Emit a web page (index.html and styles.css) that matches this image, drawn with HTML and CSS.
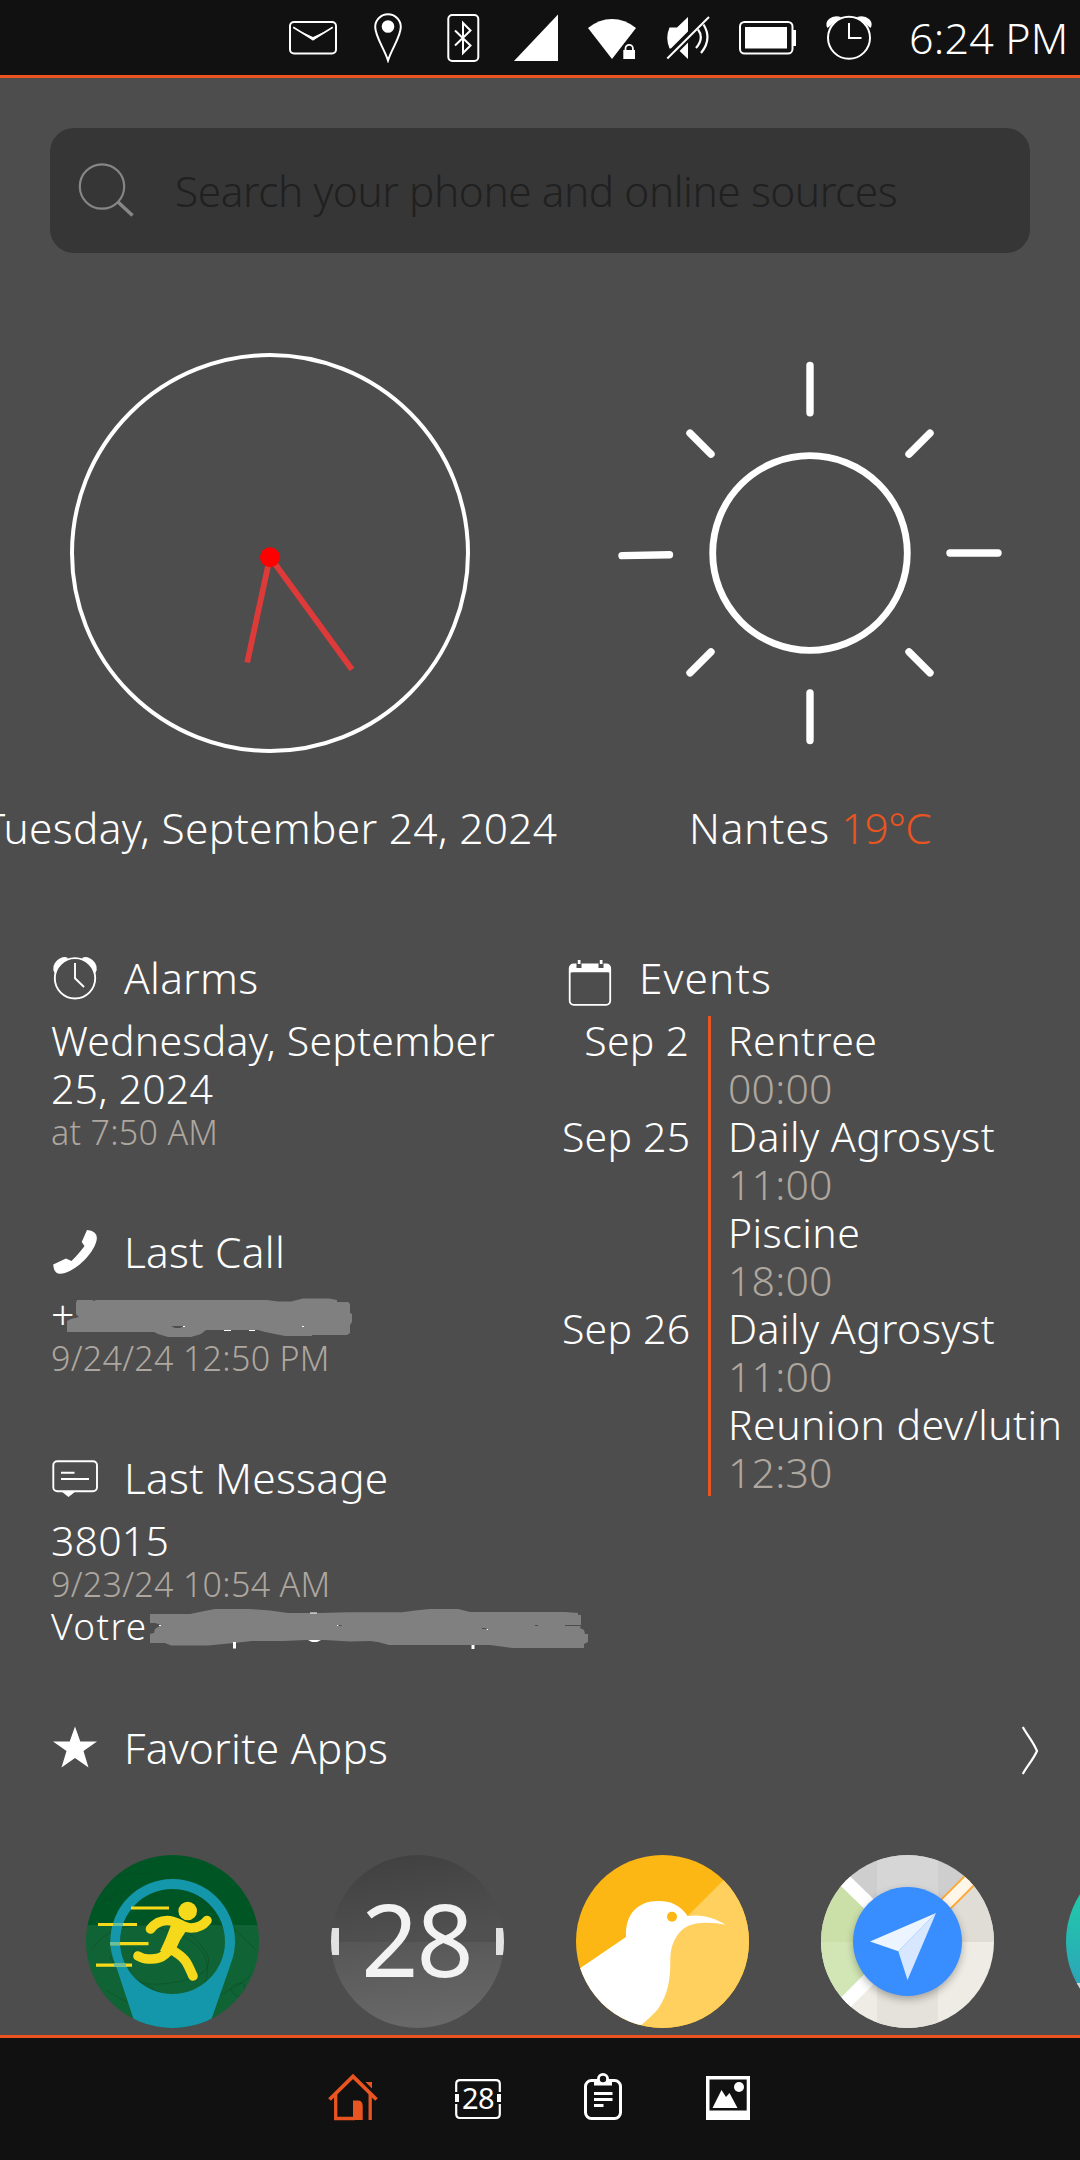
FILE: index.html
```
<!DOCTYPE html>
<html lang="en">
<head>
<meta charset="utf-8">
<title>Home</title>
<link rel="stylesheet" href="styles.css">
</head>
<body>
<header class="status-bar">
  <svg class="status-icon" viewBox="287 12 51 51"><rect x="290" y="22" width="46" height="31.5" rx="4" fill="none" stroke="#fff" stroke-width="2"/><path d="M293.2 27.2 313 39.5 332.8 27.2" fill="none" stroke="#fff" stroke-width="1.6"/><path d="M301 31.5 313 37 325 31.5 313 40.5Z" fill="#fff"/></svg>
  <svg class="status-icon" viewBox="362 12 51 51"><path d="M388 60.500C384.500 49 375.200 36.500 375.200 27A12.800 12.800 0 0 1 400.800 27C400.800 36.500 391.500 49 388 60.500Z" fill="none" stroke="#fff" stroke-width="2"/><circle cx="388" cy="26.500" r="6.300" fill="#fff"/></svg>
  <svg class="status-icon" viewBox="437 12 51 51"><rect x="448.300" y="15" width="30" height="46" rx="4" fill="none" stroke="#fff" stroke-width="2"/><path d="M455 30.500 470.500 45.500 463 53V23L470.500 30.500 455 45.500" fill="none" stroke="#fff" stroke-width="2"/></svg>
  <svg class="status-icon" viewBox="512 12 51 51"><path d="M558 14.500V61H514Z" fill="#fff"/></svg>
  <svg class="status-icon" viewBox="587 12 51 51"><path d="M588 28Q599 19 612 19T636 28L612 59Z" fill="#fff"/><path d="M621 61V48.500H624V43H635V48.500H637V61Z" fill="#111"/><rect x="623.300" y="50" width="11.700" height="9" fill="#fff"/><path d="M625.500 51V48.500a3.700 3.700 0 0 1 7.400 0V51" fill="none" stroke="#fff" stroke-width="1.800"/></svg>
  <svg class="status-icon" viewBox="662 12 51 51"><path d="M669.500 27.500H677L688 17V59L677 48.500H669.500Q665 38 669.500 27.500Z" fill="#fff"/><path d="M667 58 708 17" stroke="#111" stroke-width="8"/><path d="M667.300 58.500 709 17" stroke="#fff" stroke-width="2"/><path d="M698 29.500Q704.500 38 696 48M703.500 24.500Q712.500 39 701 53" fill="none" stroke="#fff" stroke-width="2.200"/></svg>
  <svg class="battery-icon" viewBox="737 12 62 51"><rect x="740" y="22" width="52.500" height="31.500" rx="4.500" fill="none" stroke="#fff" stroke-width="2"/><path d="M745 27H787V48.500H745ZM793 30H796V46H793Z" fill="#fff"/></svg>
  <svg class="status-icon" viewBox="823 12 51 51"><path d="M827.500 28Q824.500 23 829 19T841 17ZM870.500 28Q873.500 23 869 19T857 17Z" fill="#fff"/><circle cx="849" cy="37.800" r="21" fill="#111" stroke="#fff" stroke-width="2"/><path d="M849 23V38H861.500" fill="none" stroke="#fff" stroke-width="2"/></svg>
  <span class="status-time">6:24 PM</span>
</header>

<main class="home">
  <div class="search">
    <svg class="search-icon" viewBox="78 162 57 57"><circle cx="102" cy="186.500" r="22.200"/><path d="M118 202 132.500 215.500" stroke-width="3.500"/></svg>
    <span>Search your phone and online sources</span>
  </div>

  <section class="widgets">
    <div class="widget">
      <svg class="dial" viewBox="70 353 400 400"><circle cx="270" cy="553" r="198" fill="none" stroke="#fff" stroke-width="4"/><path d="M270 557 247.200 662.500M270 557 352 669.500" stroke="#de3a3a" stroke-width="5.800"/><circle cx="270" cy="557.300" r="10" fill="#f00"/></svg>
      <div class="widget-label"><span class="date">Tuesday, September 24, 2024</span></div>
    </div>
    <div class="widget">
      <svg class="dial" viewBox="610 353 400 400" fill="none" stroke="#fff" stroke-width="7.400" stroke-linecap="round"><circle cx="810" cy="553" r="97.300" stroke-width="6.800"/><path d="M810 365.500V412.700M810 693V740.500M950 553H998M622 555.600 669.500 554.700M690 433.200 711 454.200M930 433.200 909 454.200M690 672.800 711 651.800M930 672.800 909 651.800"/></svg>
      <div class="widget-label"><span class="city">Nantes</span> <span class="degrees">19°C</span></div>
    </div>
  </section>

  <div class="columns">
    <div class="column-left">
      <section class="card">
        <h2><svg class="card-icon" viewBox="51 954 48 48"><path d="M54.500 973Q51 966 57 960.500T68 958ZM95.500 973Q99 966 93 960.500T82 958Z" fill="#fff"/><circle cx="75" cy="978.300" r="20.200" fill="#4d4d4d" stroke="#fff" stroke-width="1.900"/><path d="M75 963V978.300L84 987" fill="none" stroke="#fff" stroke-width="1.900"/></svg>Alarms</h2>
        <p>Wednesday, September 25, 2024</p>
        <p class="sub">at 7:50 AM</p>
      </section>
      <section class="card">
        <h2><svg class="card-icon" viewBox="51 1228 48 48"><path d="M87 1230Q97.500 1231 96.800 1239C95 1253 74 1273.500 60 1273.700Q54 1274 53.200 1264.500L66 1258.500 71.500 1261C76 1257 81.500 1250 84.500 1246L81.700 1242Z" fill="#fff"/></svg>Last Call</h2>
        <p class="redacted">+<svg class="scribble call-scribble" viewBox="66 1296 290 44"><path fill="#808080" d="M77 1300H92L94 1301 96 1300H267L278 1301.500H291L303 1298.500H329L337 1300V1302H348L350 1304V1313L352 1314V1322L350 1325V1333L347 1335H312V1336H285L265 1332 258 1330H206L201 1334 191 1337H168L158 1334 154 1332H67V1321L71 1319 79 1317 76 1314V1303Z"/><path d="M171 1326H184L180 1328H175Z" fill="#4d4d4d"/><path d="M183 1326h2v1h-2zM302 1326h2v1h-2zM224 1330h7v1h-7zM249 1330h6v1h-6z" fill="#fff"/></svg></p>
        <p class="sub">9/24/24 12:50 PM</p>
      </section>
      <section class="card">
        <h2><svg class="card-icon" viewBox="51 1454 48 48"><rect x="53.300" y="1461.200" width="43.700" height="30" rx="4" fill="none" stroke="#fff" stroke-width="1.900"/><path d="M61 1491H76L68.500 1497ZM61 1471.800H74.500V1473.800H61ZM61 1478H89V1480H61Z" fill="#fff"/></svg>Last Message</h2>
        <p>38015</p>
        <p class="sub">9/23/24 10:54 AM</p>
        <p class="redacted preview">Votre<svg class="scribble message-scribble" viewBox="149 1608 440 41"><path fill="#808080" d="M150 1614H190L202 1611.500 215 1609H249L270 1610.500 288 1613H320L348 1612.300H402L415 1610.500 430 1609H458L470 1612H565L578 1613V1615H581V1625L580 1628 584 1630 585 1634H588V1642L584 1644V1648H513L505 1647 490 1645H389L378 1642 370 1641 350 1641.500 325 1640 306 1640 284 1641H252L234 1643 208 1645.500H171L165 1643H150V1634L154 1633 155 1629 161 1625 155 1623H150Z"/><path d="M233 1642h3v6.500h-3zM471.500 1645h3v4h-3zM159 1625h2v1h-2zM337 1625h1.500v1h-1.500zM487 1629h1v1h-1zM308 1640h13l-4 2h-5zM310 1612.500h7v1h-7z" fill="#fff"/><path d="M565 1625h16v1h-16zM482 1628h4v1h-4zM535 1625h3v1h-3zM338.500 1625h3v1h-3z" fill="#4d4d4d"/></svg></p>
      </section>
    </div>

    <section class="column-right">
      <h2><svg class="card-icon" viewBox="566 954 48 48"><rect x="569.700" y="964.500" width="40.500" height="40.300" rx="4" fill="none" stroke="#fff" stroke-width="1.800"/><path d="M569.500 973V967Q570 964 573 964H607Q610 964 610.500 967V973Q609 972.200 607 972.200H573Q571 972.200 569.500 973Z" fill="#fff"/><path d="M576.500 960H581.500V968H576.500ZM598.500 960H603.500V968H598.500Z" fill="#4d4d4d"/><path d="M577.800 960H580.500V964H577.800ZM599.800 960H602.500V964H599.800Z" fill="#fff"/></svg><span class="events-title">Events</span></h2>
      <div class="agenda">
        <div class="dates"><p class="day">Sep 2</p><p class="day two-events">Sep 25</p><p class="day two-events">Sep 26</p></div>
        <div class="entries">
          <p>Rentree</p><p class="hour">00:00</p>
          <p>Daily Agrosyst</p><p class="hour">11:00</p>
          <p>Piscine</p><p class="hour">18:00</p>
          <p>Daily Agrosyst</p><p class="hour">11:00</p>
          <p>Reunion dev/lutin</p><p class="hour">12:30</p>
        </div>
      </div>
    </section>
  </div>

  <h2 class="favorites"><svg class="card-icon" viewBox="51 1726 48 48"><path d="M75 1728.500 80.300 1743.500H97L83.500 1753 88.500 1769.500 75 1760 61.500 1769.500 66.500 1753 53 1743.500H69.700Z" fill="#fff"/></svg>Favorite Apps<svg class="chevron" viewBox="1020 1722 20 54"><path d="M1022.800 1725C1027 1733 1033 1739 1037 1749C1033 1758 1027 1764 1022.800 1772" fill="none" stroke="#fff" stroke-width="2.200"/></svg></h2>

  <div class="apps">
    <svg class="app" viewBox="0 0 173 173">
      <clipPath id="disc"><circle cx="86.500" cy="86.500" r="86.500"/></clipPath>
      <g clip-path="url(#disc)">
        <path d="M0 0H173V70H0Z" fill="#005524"/><path d="M0 70H173V173H0Z" fill="#106334"/>
        <g fill="none" stroke="#0d4a28" stroke-opacity=".45"><path d="M30 22Q75 10 110 40T170 95M12 52Q40 22 80 45T150 75M5 95Q30 60 80 75T120 125 60 130 30 100M55 70Q90 60 115 90T85 128 48 95M20 135Q55 160 100 150T165 120M148 130q14-6 10 6t-14-2zM20 33q14-8 10 6t-14 0z"/></g>
        <path fill="#1597ab" fill-rule="evenodd" d="M86.500 24A62.300 62.300 0 0 1 149 86.500C149 98 146 105 143 114L125.500 164 115 175H58L47.500 164 31 114C28 105 24.300 98 24.300 86.500A62.300 62.300 0 0 1 86.500 24ZM86.500 34A52.500 52.500 0 1 0 86.500 139 52.500 52.500 0 1 0 86.500 34Z"/>
        <g fill="none" stroke="#f6d91a" stroke-width="3.200"><path d="M45 53H83M12 69.500H51M24 88.700H62.500M10 110.200H46"/></g>
        <path d="M27 69.500H37M24 88.700H34M28 110.200H40" stroke="#6bbf9b" stroke-width="3.200"/>
        <circle cx="101.700" cy="56" r="9.300" fill="#f6d91a"/>
        <g fill="none" stroke="#f6d91a" stroke-width="9.600" stroke-linecap="round" stroke-linejoin="round"><path d="M64.500 74Q71 65.500 81 65.500C92 65.500 97 73 105 73Q115 73 121 65.500M84 94C77 104 70 104 62 104Q57 104 52 101M86 95C101 104 101 108 107 121"/></g>
        <path d="M82 66 100 76Q94 84 90 94L84 101 74 96Q80 84 85 70Z" fill="#f6d91a"/>
      </g>
    </svg>
    <svg class="app" viewBox="0 0 173 173">
      <defs><linearGradient id="flipTop" x1="0" y1="0" x2=".3" y2="1"><stop offset="0" stop-color="#3f3f3f"/><stop offset="1" stop-color="#505050"/></linearGradient><linearGradient id="flipBottom" x1="0" y1="0" x2=".2" y2="1"><stop offset="0" stop-color="#565656"/><stop offset="1" stop-color="#686868"/></linearGradient></defs>
      <g clip-path="url(#disc)"><path d="M0 0H173V87H0Z" fill="url(#flipTop)"/><path d="M0 87H173V173H0Z" fill="url(#flipBottom)"/><path d="M0 73H8V100H0ZM165 73H173V100H165Z" fill="#e2e2e2"/></g>
      <text class="flip-number" x="85.500" y="122" text-anchor="middle">28</text>
    </svg>
    <svg class="app" viewBox="0 0 173 173">
      <g clip-path="url(#disc)"><path d="M0 0H173V173H0Z" fill="#fdb714"/><path d="M173 0V173H0V172Z" fill="#ffd05e"/>
      <path d="M0 116 50 82C49 60 61 46 82.300 46C95 46 104 50 111.700 61C127 59 138 63 149.700 69.700C138 67.500 122 66 111 71.500C101 77 94.500 89 94.300 104C94.500 122 93 138 82 154Q76 161 64 171L60 175H0Z" fill="#fff"/><circle cx="96" cy="61.700" r="5" fill="#fdb714"/></g>
    </svg>
    <svg class="app" viewBox="0 0 173 173">
      <defs><filter id="lift" x="-20%" y="-20%" width="140%" height="140%"><feGaussianBlur stdDeviation="4"/></filter></defs>
      <g clip-path="url(#disc)">
        <path d="M0 0H173V87H0Z" fill="#cecece"/><path d="M56 0H117V60H56Z" fill="#d6d6d6"/><path d="M173 0V87H86Z" fill="#e0dcd6"/>
        <path d="M0 87H173V173H0Z" fill="#efece5"/><path d="M56 87H117V173H56Z" fill="#e5e2db"/>
        <path d="M0 0 86.500 87H0Z" fill="#cbe0a8"/><path d="M0 87H86.500L0 173Z" fill="#d2e6b5"/>
        <path d="M10 12 86 86 10 162" fill="none" stroke="#fff" stroke-width="13.500"/>
        <path d="M86 88 163 11" stroke="#ffa733" stroke-width="15"/><path d="M86 88 163 11" stroke="#fff6ea" stroke-width="11"/>
        <circle cx="86.500" cy="90" r="54" fill="#000" opacity=".3" filter="url(#lift)"/>
        <circle cx="86.500" cy="86.500" r="54.500" fill="#388eff"/>
        <path d="M49 86.500 115 58 77.300 96.300Z" fill="#ecf4ff"/><path d="M115 58 86.500 125 77.300 96.300Z" fill="#d6e7ff"/>
      </g>
    </svg>
    <svg class="app" viewBox="0 0 173 173">
      <defs><linearGradient id="teal" x1="0" y1="0" x2="0" y2="1"><stop offset=".2" stop-color="#20cbaa"/><stop offset=".75" stop-color="#2ca5b8"/></linearGradient></defs>
      <g clip-path="url(#disc)"><path d="M0 0H173V173H0Z" fill="url(#teal)"/><path d="M0 128H173V173H0Z" fill="#d5d8d8"/></g>
    </svg>
  </div>
</main>

<nav class="bottom-bar">
  <svg class="nav-icon" viewBox="328 2072 50 50"><path d="M329.500 2099.500 353 2076.500 376.500 2099.500" fill="none" stroke="#e95420" stroke-width="3.800"/><path d="M335.700 2094V2118.500H355M370.200 2094V2120" fill="none" stroke="#e95420" stroke-width="3.300"/><path d="M353 2120V2100.500H358Q362.700 2100.500 362.700 2106V2120ZM365.500 2082H372V2088.500Z" fill="#e95420"/></svg>
  <svg class="nav-icon" viewBox="453 2072 50 50"><path d="M456.200 2092V2084Q456.200 2080.200 460 2080.200H496Q499.800 2080.200 499.800 2084V2092M456.200 2104V2114Q456.200 2118 460 2118H496Q499.800 2118 499.800 2114V2104" fill="none" stroke="#fff" stroke-width="2.200"/><path d="M455 2094H459V2102H455ZM497 2094H501V2102H497Z" fill="#fff"/><text class="calendar-number" x="478" y="2108.500" text-anchor="middle">28</text></svg>
  <svg class="nav-icon" viewBox="578 2072 50 50"><rect x="585.500" y="2080.500" width="35" height="38" rx="6" fill="none" stroke="#fff" stroke-width="3"/><path d="M594 2079H612V2085.500H594ZM594 2092H612.500V2095H594ZM594 2098H612.500V2101H594ZM594 2104H603.500V2107H594Z" fill="#fff"/><circle cx="603" cy="2079" r="4.600" fill="#111" stroke="#fff" stroke-width="2.800"/></svg>
  <svg class="nav-icon" viewBox="703 2072 50 50"><path fill-rule="evenodd" d="M706 2076H750V2120H706ZM709.500 2079.500V2110.500H746.700V2079.500Z" fill="#fff"/><path d="M712.500 2108 721.500 2090 726 2097 729.500 2093 737.500 2108Z" fill="#fff"/><circle cx="739" cy="2087" r="5" fill="#fff"/></svg>
</nav>
</body>
</html>
```
FILE: styles.css
```
* { box-sizing: border-box; }

body {
  margin: 0;
  width: 1080px;
  height: 2160px;
  display: flex;
  flex-direction: column;
  overflow: hidden;
  background: #4d4d4d;
  color: #fff;
  font-family: "Noto Sans", "Open Sans", sans-serif;
  font-weight: 300;
  font-size: 41px;
  line-height: 48px;
  letter-spacing: .2px;
}

p, h2 { margin: 0; }

svg { display: block; flex: none; }

.status-bar {
  height: 78px;
  display: flex;
  align-items: center;
  gap: 24px;
  padding-left: 287px;
  background: #111;
  border-bottom: 3px solid #e95420;
}

.status-icon { width: 51px; height: 51px; }
.battery-icon { width: 62px; height: 51px; }

.status-time {
  margin-left: 11px;
  font-size: 43px;
  white-space: nowrap;
}

.home {
  height: 1957px;
  flex: none;
  padding-top: 50px;
  overflow: hidden;
}

.search {
  height: 125px;
  margin: 0 50px;
  padding-left: 28px;
  display: flex;
  align-items: center;
  gap: 40px;
  border-radius: 24px;
  background: #363636;
  color: #202020;
  font-size: 42.4px;
  letter-spacing: -.45px;
  white-space: nowrap;
}

.search-icon {
  width: 57px;
  height: 57px;
  fill: none;
  stroke: #868686;
  stroke-width: 2.2;
}

.widgets {
  margin-top: 100px;
  display: grid;
  grid-template-columns: 1fr 1fr;
}

.widget {
  display: flex;
  flex-direction: column;
  align-items: center;
  gap: 51px;
  min-width: 0;
}

.dial { width: 400px; height: 400px; }

.widget-label {
  font-size: 42.4px;
  white-space: nowrap;
}

.date { letter-spacing: .32px; }
.city { letter-spacing: .7px; }
.degrees { color: #e95420; letter-spacing: -.8px; }

.columns {
  margin-top: 102px;
  display: grid;
  grid-template-columns: 562px 518px;
}

.column-left {
  padding-left: 51px;
  display: flex;
  flex-direction: column;
  gap: 76px;
}

h2 {
  display: flex;
  gap: 25px;
  font-size: 42.4px;
  font-weight: 300;
  line-height: 48px;
  letter-spacing: .25px;
}

.card h2, .column-right h2 { margin-bottom: 14px; }

.card-icon { width: 48px; height: 48px; overflow: visible; }

.events-title { letter-spacing: 1.1px; }

.sub {
  font-size: 34px;
  line-height: 40px;
  letter-spacing: .3px;
  color: #aea79f;
}

.redacted { position: relative; }

.preview {
  font-size: 37px;
  line-height: 44px;
  letter-spacing: 1.4px;
}

.scribble { position: absolute; }

.call-scribble { left: 15px; top: 6px; width: 290px; height: 44px; }
.message-scribble { left: 98px; top: 4px; width: 440px; height: 41px; }

.column-right h2 { padding-left: 4px; }

.agenda { display: flex; white-space: nowrap; }

.dates {
  width: 146px;
  padding-right: 19px;
  text-align: right;
}

.day { height: 96px; }
.two-events { height: 192px; }

.entries {
  border-left: 3px solid #e95420;
  padding-left: 17px;
  letter-spacing: .45px;
}

.hour { color: #aea79f; letter-spacing: .2px; }

.favorites {
  margin-top: 76px;
  padding-left: 51px;
  padding-right: 40px;
}

.chevron {
  width: 20px;
  height: 54px;
  margin-left: auto;
}

.apps {
  margin-top: 77px;
  padding-left: 86px;
  display: flex;
  gap: 72px;
}

.app { width: 173px; height: 173px; }

.flip-number {
  font: 400 100px "Noto Sans", sans-serif;
  letter-spacing: -2px;
  fill: #f2f2f2;
}

.bottom-bar {
  flex: 1;
  padding: 34px 0 0 328px;
  display: flex;
  gap: 75px;
  background: #111;
  border-top: 3px solid #e95420;
}

.nav-icon { width: 50px; height: 50px; }

.calendar-number {
  font: 400 29px "Noto Sans", sans-serif;
  letter-spacing: -.5px;
  fill: #fff;
}
```
